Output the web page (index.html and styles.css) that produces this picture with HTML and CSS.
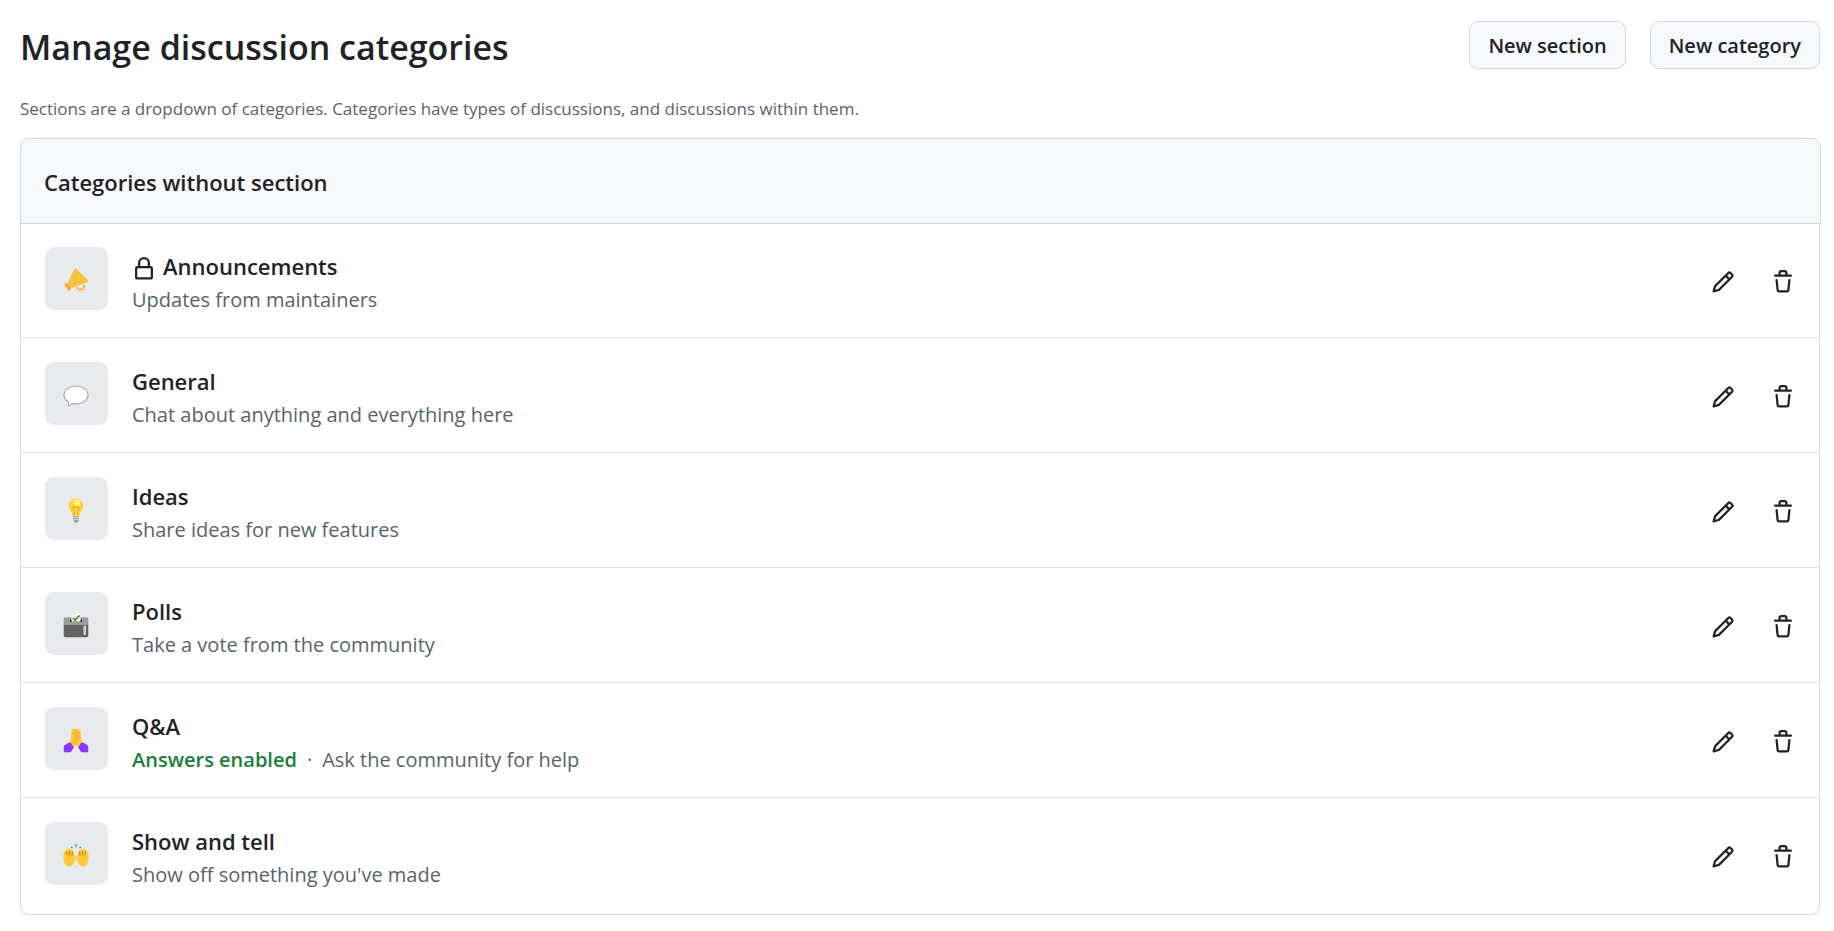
FILE: index.html
```html
<!DOCTYPE html>
<html lang="en">
<head>
<meta charset="utf-8">
<title>Manage discussion categories</title>
<link rel="stylesheet" href="styles.css">
</head>
<body>
<svg class="sprite" aria-hidden="true">
  <symbol id="pencil" viewBox="0 0 16 16"><path d="M11.013 1.427a1.75 1.75 0 0 1 2.474 0l1.086 1.086a1.75 1.75 0 0 1 0 2.474l-8.61 8.61c-.21.21-.47.364-.756.445l-3.251.93a.75.75 0 0 1-.927-.928l.929-3.25c.081-.286.235-.547.445-.758l8.61-8.61Zm.176 4.823L9.75 4.81l-6.286 6.287a.253.253 0 0 0-.064.108l-.558 1.953 1.953-.558a.253.253 0 0 0 .108-.064Zm1.238-3.763a.25.25 0 0 0-.354 0L10.811 3.75l1.439 1.44 1.263-1.263a.25.25 0 0 0 0-.354Z"/></symbol>
  <symbol id="trash" viewBox="0 0 16 16"><path d="M11 1.75V3h2.25a.75.75 0 0 1 0 1.5H2.75a.75.75 0 0 1 0-1.5H5V1.75C5 .784 5.784 0 6.75 0h2.5C10.216 0 11 .784 11 1.75ZM4.496 6.675l.66 6.6a.25.25 0 0 0 .249.225h5.19a.25.25 0 0 0 .249-.225l.66-6.6a.75.75 0 0 1 1.492.149l-.66 6.6A1.748 1.748 0 0 1 10.595 15h-5.19a1.75 1.75 0 0 1-1.741-1.575l-.66-6.6a.75.75 0 1 1 1.492-.15ZM6.5 1.75V3h3V1.75a.25.25 0 0 0-.25-.25h-2.5a.25.25 0 0 0-.25.25Z"/></symbol>
</svg>
<main class="page">
  <header class="page-header">
    <h1 class="page-title">Manage discussion categories</h1>
    <div class="header-actions">
      <button class="button" type="button">New section</button>
      <button class="button" type="button">New category</button>
    </div>
  </header>
  <p class="intro">Sections are a dropdown of categories. Categories have types of discussions, and discussions within them.</p>
  <section class="box">
    <div class="box-header"><h2 class="box-title">Categories without section</h2></div>
    <ul class="category-list">
      <li class="category">
        <span class="tile"><svg class="emoji" viewBox="0 0 26 26" aria-hidden="true"><path d="M13.500 1.800 25 13.200c.6.8 0 1.900-1 2.100L8 21.300 4 17.500 11 2.600c.5-1 1.700-1.500 2.500-.8Z" fill="#f9c23c"/><path d="M13.500 19.500c.6 5.600 8.300 4.300 7.500-2.200" fill="none" stroke="#ffb02e" stroke-width="1.700"/><path d="m3.300 15.800 4.500 5.700-1.200 2.900L1.200 18Z" fill="#f9a52f"/></svg></span>
        <div class="category-text">
          <h3 class="category-name"><svg class="icon lock" viewBox="0 0 16 16" role="img" aria-label="Locked"><path d="M4 4a4 4 0 0 1 8 0v2h.25c.966 0 1.750.784 1.750 1.750v5.500A1.750 1.750 0 0 1 12.250 15h-8.500A1.750 1.750 0 0 1 2 13.250v-5.500C2 6.784 2.784 6 3.750 6H4Zm8.250 3.500h-8.500a.25.25 0 0 0-.25.25v5.500c0 .138.112.25.25.25h8.500a.25.25 0 0 0 .25-.25v-5.500a.25.25 0 0 0-.25-.25ZM10.500 6V4a2.500 2.500 0 1 0-5 0v2Z"/></svg>Announcements</h3>
          <p class="category-description">Updates from maintainers</p>
        </div>
        <div class="category-actions">
          <button class="icon-button" type="button" aria-label="Edit Announcements"><svg class="icon"><use href="#pencil"/></svg></button>
          <button class="icon-button" type="button" aria-label="Delete Announcements"><svg class="icon"><use href="#trash"/></svg></button>
        </div>
      </li>
      <li class="category">
        <span class="tile"><svg class="emoji" viewBox="0 0 26 26" aria-hidden="true"><path d="M13 4c6.600 0 12 3.900 12 9s-5.400 9-12 9c-1.300 0-2.500-.1-3.700-.4-1 .9-2.300 1.900-3.900 2.200.6-1.500.4-2.900-.1-4C2.700 18.200 1 15.800 1 13c0-5.100 5.400-9 12-9Z" fill="#fff" stroke="#a3a3a3" stroke-width="1.100"/></svg></span>
        <div class="category-text">
          <h3 class="category-name">General</h3>
          <p class="category-description">Chat about anything and everything here</p>
        </div>
        <div class="category-actions">
          <button class="icon-button" type="button" aria-label="Edit General"><svg class="icon"><use href="#pencil"/></svg></button>
          <button class="icon-button" type="button" aria-label="Delete General"><svg class="icon"><use href="#trash"/></svg></button>
        </div>
      </li>
      <li class="category">
        <span class="tile"><svg class="emoji" viewBox="0 0 26 26" aria-hidden="true"><path d="M13 1.500c4.300 0 7.300 3.200 7.300 7.200 0 3.500-2.200 5-3.300 7.600-.6 1.600-.6 3-1.200 3h-5.600c-.6 0-.6-1.400-1.200-3-1.100-2.600-3.300-4.100-3.300-7.600 0-4 3-7.200 7.300-7.200Z" fill="#fcd53f"/><path d="m11.500 18-1.400-6.500c-.3-2 2.700-2.200 2.900 0 .2-2.200 3.200-2 2.900 0L14.500 18" fill="none" stroke="#f9a52f" stroke-width="1.200"/><circle cx="14" cy="5.800" r="3.200" fill="#fff47b"/><path d="M10 19.300h6v3.800l-1.700 2.400h-2.600L10 23.100Z" fill="#9b9b9b"/><path d="m10 21 6-.8m-6 2.800 6-.8" stroke="#dcdcdc"/></svg></span>
        <div class="category-text">
          <h3 class="category-name">Ideas</h3>
          <p class="category-description">Share ideas for new features</p>
        </div>
        <div class="category-actions">
          <button class="icon-button" type="button" aria-label="Edit Ideas"><svg class="icon"><use href="#pencil"/></svg></button>
          <button class="icon-button" type="button" aria-label="Delete Ideas"><svg class="icon"><use href="#trash"/></svg></button>
        </div>
      </li>
      <li class="category">
        <span class="tile"><svg class="emoji" viewBox="0 0 26 26" aria-hidden="true"><path d="M.7 12.500h24.600v11a1.700 1.700 0 0 1-1.700 1.700H2.400a1.700 1.700 0 0 1-1.700-1.700Z" fill="#636363"/><path d="M2 5.200h22l1.300 1.300V13H.7V6.500Z" fill="#9b9b9b"/><path d="M7 7.500h12V10H7Z" fill="#321b41"/><path d="M8.500 1.500h9v8.200h-9Z" fill="#f4f4f4"/><path d="m10 6 2 2.200 4.500-4.700" fill="none" stroke="#44911b" stroke-width="1.800"/><rect x="20.500" y="13.500" width="2.500" height="9.500" rx="1.200" fill="#d3d3d3"/></svg></span>
        <div class="category-text">
          <h3 class="category-name">Polls</h3>
          <p class="category-description">Take a vote from the community</p>
        </div>
        <div class="category-actions">
          <button class="icon-button" type="button" aria-label="Edit Polls"><svg class="icon"><use href="#pencil"/></svg></button>
          <button class="icon-button" type="button" aria-label="Delete Polls"><svg class="icon"><use href="#trash"/></svg></button>
        </div>
      </li>
      <li class="category">
        <span class="tile"><svg class="emoji" viewBox="0 0 26 26" aria-hidden="true"><path d="M8.500 3.500c.5-1.800 2.700-1.900 4.500-1.200 1.800-.7 4-.6 4.500 1.200l.7 9 2 4.500-3.700 4.500L13 18l-3.500 3.500L5.800 17l2-4.500Z" fill="#ffc83d"/><path d="M10.300 5v3m2.900-5.500v10.500L11 16.500m4.500-12.500v6l1 2.500" fill="none" stroke="#ef9a25" stroke-width="1"/><path d="M5.500 15.700h2.300l3 4.600-2.900 4.900H.8v-6.500Zm15 0h-2.300l-3 4.600 2.900 4.900h7.100v-6.500Z" fill="#8739ff"/></svg></span>
        <div class="category-text">
          <h3 class="category-name">Q&amp;A</h3>
          <p class="category-description"><span class="answers">Answers enabled</span><span class="dot">·</span>Ask the community for help</p>
        </div>
        <div class="category-actions">
          <button class="icon-button" type="button" aria-label="Edit Q&amp;A"><svg class="icon"><use href="#pencil"/></svg></button>
          <button class="icon-button" type="button" aria-label="Delete Q&amp;A"><svg class="icon"><use href="#trash"/></svg></button>
        </div>
      </li>
      <li class="category">
        <span class="tile"><svg class="emoji" viewBox="0 0 26 26" aria-hidden="true"><path d="M2.500 9c.3-1.600 1.200-2 2-1.300.7-1.300 2.200-1.300 2.700 0 1.300-.8 2.300 0 2.500 1.500 1.500.1 1.400 1.800 1.500 4.300 1.700-.9 1.800.8 1.400 2.500-1 4.500-2.500 8.500-6.400 8.500C2 24.500.5 20.500.5 14c0-2.800.8-4.500 2-5Zm21 0c-.3-1.600-1.200-2-2-1.300-.7-1.300-2.200-1.300-2.700 0-1.300-.8-2.300 0-2.500 1.500-1.500.1-1.400 1.800-1.500 4.300-1.700-.9-1.800.8-1.400 2.500 1 4.500 2.500 8.500 6.400 8.500 4.200 0 5.700-4 5.700-10.500 0-2.800-.8-4.500-2-5Z" fill="#ffc83d"/><path d="m3.500 9.500.5 4m2.300-5 .3 5m2.700-4-.2 4.300M22.500 9.500l-.5 4m-2.300-5-.3 5m-2.700-4 .2 4.300" stroke="#d67d00" stroke-width="1"/><path d="m7.300 6.200 1.500-2.200 1.400 2.200Zm4.200-3.700h3L13 6Zm7.200 3.700L17.200 4l-1.400 2.200Z" fill="#3f9dee"/></svg></span>
        <div class="category-text">
          <h3 class="category-name">Show and tell</h3>
          <p class="category-description">Show off something you've made</p>
        </div>
        <div class="category-actions">
          <button class="icon-button" type="button" aria-label="Edit Show and tell"><svg class="icon"><use href="#pencil"/></svg></button>
          <button class="icon-button" type="button" aria-label="Delete Show and tell"><svg class="icon"><use href="#trash"/></svg></button>
        </div>
      </li>
    </ul>
  </section>
</main>
</body>
</html>
```
FILE: styles.css
```css
* { box-sizing: border-box; }
body {
  margin: 0;
  background: #fff;
  color: #1f2328;
  font-family: "Open Sans", "Noto Sans", sans-serif;
  font-size: 20px;
}
h1, h2, h3, p, ul { margin: 0; padding: 0; }
.sprite { display: none; }
.page { padding: 21px 14px 16px 20px; }
.page-header {
  display: flex;
  align-items: center;
  justify-content: space-between;
  min-height: 48px;
}
.page-title { font-size: 34px; line-height: 52px; font-weight: 600; }
.header-actions { display: flex; gap: 24px; align-self: flex-start; }
.button {
  height: 48px;
  padding: 2px 18px 0;
  border: 1px solid #d1d9e0;
  border-radius: 9px;
  background: #f6f8fa;
  color: inherit;
  font: 600 20px/28px "Open Sans", "Noto Sans", sans-serif;
}
.intro { margin-top: 22px; color: #59636e; font-size: 17px; line-height: 28px; }
.box {
  margin-top: 15px;
  border: 1px solid #d1d9e0;
  border-radius: 9px;
}
.box-header {
  margin: -1px -2px 0 -1px;
  padding: 29px 23px 27px;
  border: 1px solid #d1d9e0;
  border-radius: 9px 9px 0 0;
  background: #f6f8fa;
}
.box-title { font-size: 22px; line-height: 28px; font-weight: 600; }
.category-list { list-style: none; }
.category {
  display: flex;
  align-items: flex-start;
  padding: 24px 20px 27px 24px;
}
.category:first-child { padding-top: 23px; }
.category + .category { border-top: 1px solid #dfe2e6; }
.category:last-child { padding-bottom: 29px; }
.tile {
  display: grid;
  place-items: center;
  flex: none;
  width: 63px;
  height: 63px;
  padding: 3px 1px 0 0;
  border-radius: 9px;
  background: #e8eaec;
}
.emoji { width: 26px; height: 26px; }
.category-text { flex: 1; margin: 2px 0 -7px 24px; }
.category-name {
  display: flex;
  align-items: center;
  gap: 7px;
  font-size: 22px;
  line-height: 34px;
  font-weight: 600;
}
.category-description { color: #59636e; font-size: 20px; line-height: 34px; }
.answers { color: #1a7f37; font-weight: 600; }
.dot { margin: 0 10px; }
.category-actions { display: flex; gap: 28px; margin-top: 19px; }
.icon-button {
  display: grid;
  place-items: center;
  width: 32px;
  height: 32px;
  padding: 0;
  border: 0;
  background: none;
  color: inherit;
}
.icon { width: 24px; height: 24px; fill: currentColor; }
.lock { margin-top: 5px; }
```
